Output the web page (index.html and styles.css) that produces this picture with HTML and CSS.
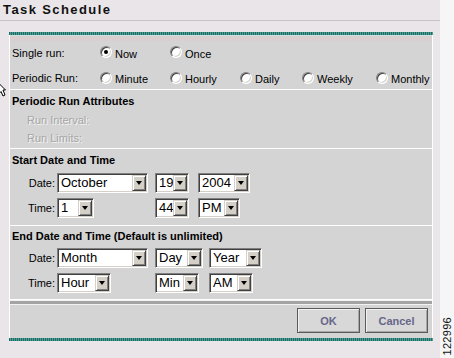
FILE: index.html
```html
<!DOCTYPE html>
<html>
<head>
<meta charset="utf-8">
<link rel="stylesheet" href="styles.css">
</head>
<body>
<div class="page">
  <div class="main">
    <div class="title">Task Schedule</div>
    <div class="panel">
      <div class="stripe"></div>
      <div class="stripe-light"></div>
      <div class="band"></div>
      <div class="sec sec-run">
        <div class="runrow">
          <span class="lbl">Single run:</span>
          <span class="opt"><span class="radio on"></span>Now</span>
          <span class="opt"><span class="radio"></span>Once</span>
        </div>
        <div class="runrow">
          <span class="lbl">Periodic Run:</span>
          <span class="opt"><span class="radio"></span>Minute</span>
          <span class="opt"><span class="radio"></span>Hourly</span>
          <span class="opt"><span class="radio"></span>Daily</span>
          <span class="opt"><span class="radio"></span>Weekly</span>
          <span class="opt"><span class="radio"></span>Monthly</span>
        </div>
      </div>
      <div class="sec sec-attr">
        <div class="head">Periodic Run Attributes</div>
        <div class="dis first">Run Interval:</div>
        <div class="dis">Run Limits:</div>
      </div>
      <div class="sec sec-start">
        <div class="head">Start Date and Time</div>
        <div class="dtgrid start">
          <span class="dl">Date:</span>
          <span class="sel w91"><span class="val">October</span><span class="arr"></span></span>
          <span class="sel w33"><span class="val">19</span><span class="arr"></span></span>
          <span class="sel w52"><span class="val">2004</span><span class="arr"></span></span>
          <span class="dl">Time:</span>
          <span class="sel w37"><span class="val">1</span><span class="arr"></span></span>
          <span class="sel w33"><span class="val">44</span><span class="arr"></span></span>
          <span class="sel w42"><span class="val">PM</span><span class="arr"></span></span>
        </div>
      </div>
      <div class="sec sec-end">
        <div class="head">End Date and Time (Default is unlimited)</div>
        <div class="dtgrid end">
          <span class="dl">Date:</span>
          <span class="sel w91"><span class="val">Month</span><span class="arr"></span></span>
          <span class="sel w48"><span class="val">Day</span><span class="arr"></span></span>
          <span class="sel w53"><span class="val">Year</span><span class="arr"></span></span>
          <span class="dl">Time:</span>
          <span class="sel w54"><span class="val">Hour</span><span class="arr"></span></span>
          <span class="sel w44"><span class="val">Min</span><span class="arr"></span></span>
          <span class="sel w44"><span class="val">AM</span><span class="arr"></span></span>
        </div>
      </div>
      <div class="sepbar"></div>
      <div class="btns">
        <span class="btn">OK</span>
        <span class="btn">Cancel</span>
      </div>
      <div class="stripe"></div>
    </div>
    <svg class="cursor" width="7" height="15" viewBox="0 0 7 15"><path d="M-1 0.5 L5.5 7 L3 7 L5 12 L3 13 L1 8.5 L-1 10.5 Z" fill="#fff" stroke="#000" stroke-width="1"/></svg>
  </div>
  <div class="side"><span class="fig">122996</span></div>
</div>
</body>
</html>
```

FILE: styles.css
```css
html, body {
  margin: 0;
  padding: 0;
}
body {
  width: 454px;
  height: 358px;
  overflow: hidden;
  font-family: "Liberation Sans", Arial, sans-serif;
  font-size: 11px;
  color: #000;
  background: #ebe7ea;
}
.page {
  display: flex;
  height: 358px;
}
.main {
  position: relative;
  width: 440px;
  background: #e9e5e8;
}
.side {
  flex: 1;
  background: #f7f6f7;
  display: flex;
  align-items: flex-end;
  justify-content: center;
  padding-bottom: 2px;
}
.fig {
  writing-mode: vertical-rl;
  transform: rotate(180deg);
  font-size: 11px;
  letter-spacing: 0.3px;
  color: #111;
  line-height: 11px;
}
.title {
  padding: 2px 0 0 3px;
  box-sizing: border-box;
  height: 21px;
  border-bottom: 1px solid #c8c3c7;
  font-size: 13px;
  font-weight: bold;
  letter-spacing: 1.4px;
  line-height: 16px;
  color: #111;
}
.panel {
  margin: 11px 0 0 9px;
  width: 424px;
  box-sizing: border-box;
  border-left: 1px solid #fff;
  border-right: 1px solid #fff;
  background: #d4d4d4;
}
.stripe {
  height: 3px;
  background: repeating-linear-gradient(90deg, #1f6c64 0 1px, #4f9d95 1px 2px);
  margin: 0 -1px;
}
.stripe-light {
  height: 1px;
  background: #cfe2e0;
}
.band {
  height: 5px;
  background: #d9cfd0;
}
.sec {
  border-bottom: 1px solid #fff;
  padding-left: 2px;
}
.sec-run {
  height: 49px;
  box-sizing: border-box;
  display: flex;
  flex-direction: column;
  gap: 4px;
  padding-top: 1px;
}
.runrow {
  height: 22px;
  display: grid;
  grid-template-columns: 88px 70px 70px 62px 74px auto;
  align-items: center;
}
.opt {
  display: flex;
  align-items: center;
  gap: 3px;
  padding-top: 2px;
}
.radio {
  width: 12px;
  height: 12px;
  box-sizing: border-box;
  border-radius: 50%;
  border: 1px solid;
  border-color: #808080 #ffffff #ffffff #808080;
  background: #fff;
  box-shadow: inset 1px 1px 0 #404040, inset -1px -1px 0 #d4d0c8;
  display: flex;
  align-items: center;
  justify-content: center;
  margin-top: -3px;
}
.radio.on::after {
  content: "";
  width: 4px;
  height: 4px;
  border-radius: 50%;
  background: #000;
}
.head {
  font-weight: bold;
  line-height: 14px;
}
.sec-attr {
  padding-top: 4px;
  padding-bottom: 3px;
}
.dis {
  line-height: 14px;
  padding-left: 15px;
  color: #a6a6a6;
  text-shadow: 1px 1px 0 #f4f4f4;
  margin-top: 4px;
}
.dis.first {
  margin-top: 5px;
}
.sec-start {
  padding-top: 4px;
  padding-bottom: 7px;
}
.sec-end {
  padding-top: 3px;
  padding-bottom: 6px;
}
.dtgrid {
  display: grid;
  row-gap: 5px;
  align-items: center;
  justify-items: start;
}
.dtgrid.start {
  margin-top: 6px;
  grid-template-columns: 45px 98px 43px auto;
}
.dtgrid.end {
  margin-top: 5px;
  grid-template-columns: 45px 98px 54px auto;
}
.dl {
  justify-self: end;
  padding-right: 2px;
}
.sel {
  display: flex;
  height: 20px;
  box-sizing: border-box;
  border: 1px solid;
  border-color: #808080 #ffffff #ffffff #808080;
  box-shadow: inset 1px 1px 0 #404040, inset -1px -1px 0 #d4d0c8;
  background: #fff;
  padding: 1px;
}
.val {
  flex: 1;
  min-width: 0;
  font-size: 13px;
  line-height: 16px;
  padding-left: 2px;
  white-space: nowrap;
}
.arr {
  flex: none;
  width: 14px;
  height: 16px;
  box-sizing: border-box;
  background: #d4d0c8;
  border: 1px solid;
  border-color: #d4d0c8 #404040 #404040 #d4d0c8;
  box-shadow: inset 1px 1px 0 #fff, inset -1px -1px 0 #808080;
  display: flex;
  align-items: center;
  justify-content: center;
  position: relative;
}
.arr::after {
  content: "";
  width: 0;
  height: 0;
  border-left: 3.5px solid transparent;
  border-right: 3.5px solid transparent;
  border-top: 4px solid #000;
}
.w91 { width: 91px; }
.w33 { width: 34px; }
.w52 { width: 52px; }
.w37 { width: 37px; }
.w42 { width: 42px; }
.w48 { width: 48px; }
.w53 { width: 53px; }
.w54 { width: 54px; }
.w44 { width: 44px; }
.sepbar {
  height: 3px;
  background: #a4a4a4;
  border-top: 1px solid #f2f2f2;
  border-bottom: 1px solid #f2f2f2;
}
.btns {
  display: flex;
  justify-content: flex-end;
  gap: 5px;
  padding: 3px 4px 5px 0;
}
.btn {
  width: 63px;
  height: 25px;
  box-sizing: border-box;
  border: 1px solid #5a5a5a;
  background: #d8d8d8;
  box-shadow: inset 1px 1px 0 #f2f2f2, inset -1px -1px 0 #a8a8a8;
  display: flex;
  align-items: center;
  justify-content: center;
  font-weight: bold;
  font-size: 11px;
  color: #66668a;
}
.cursor {
  position: absolute;
  left: 0;
  top: 83px;
}
```
